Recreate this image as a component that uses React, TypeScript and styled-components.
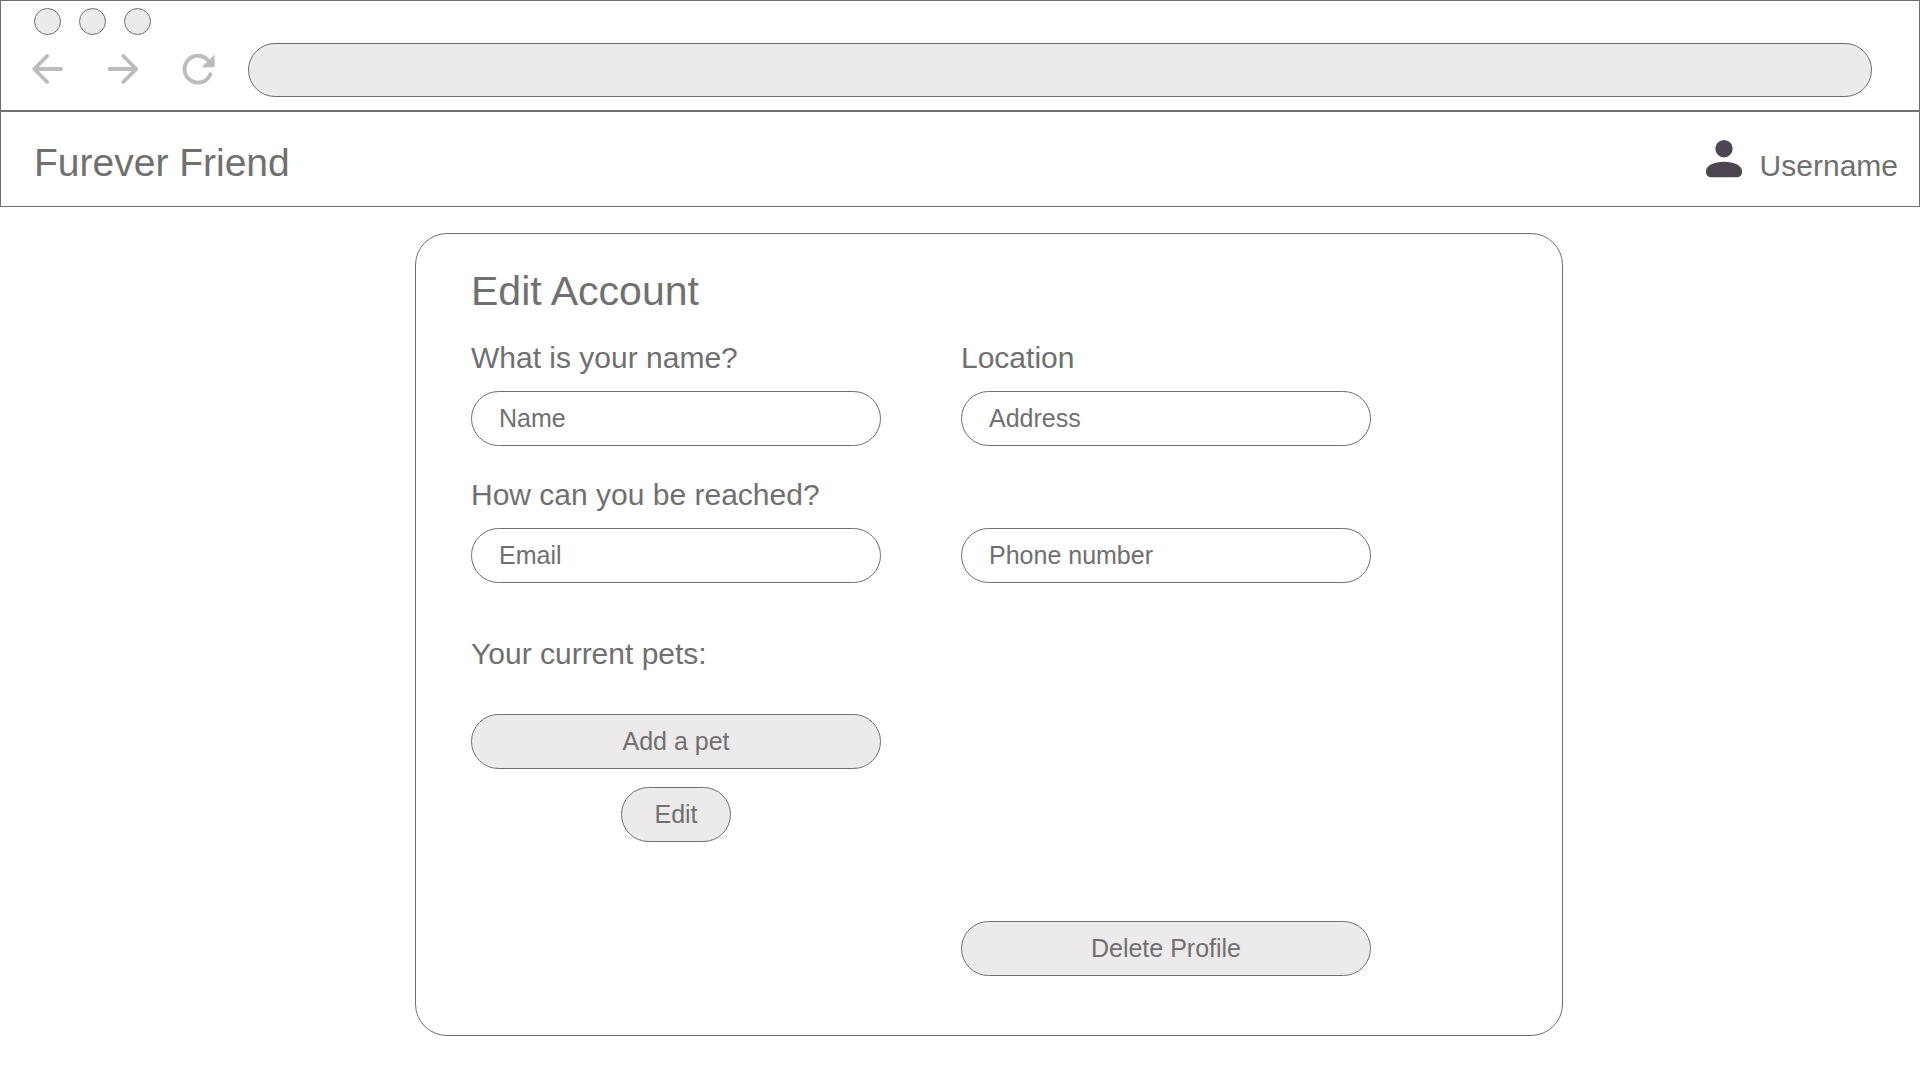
import React, { useId } from "react";
import styled, { createGlobalStyle } from "styled-components";

const ink = "#707070";
const fill = "#eceaeb";

const GlobalStyle = createGlobalStyle`
  *, *::before, *::after { box-sizing: border-box; }
  body {
    margin: 0;
    background: #fff;
    color: ${ink};
    font-family: "Liberation Sans", Arial, Helvetica, sans-serif;
  }
  button, input { font: inherit; color: inherit; }
`;

const BrowserBar = styled.div`
  border: 1px solid ${ink};
  padding: 7px 47px 13px 31px;
`;

const WindowButtons = styled.div`
  display: flex;
  gap: 18px;
  padding-left: 2px;
`;

const WindowButton = styled.button`
  width: 27px;
  height: 27px;
  padding: 0;
  border: 1px solid ${ink};
  border-radius: 50%;
  background: ${fill};
`;

const Toolbar = styled.div`
  display: flex;
  align-items: center;
  padding-top: 8px;
`;

const NavButtons = styled.div`
  display: flex;
  gap: 43px;
  margin-right: 34px;
`;

const NavButton = styled.button`
  display: flex;
  width: 32px;
  height: 32px;
  padding: 0;
  border: 0;
  background: none;
  color: #bbbcbd;

  svg {
    width: 100%;
    height: 100%;
    overflow: visible;
  }
`;

const AddressInput = styled.input`
  flex: 1;
  min-width: 0;
  height: 54px;
  padding: 0 28px;
  border: 1px solid ${ink};
  border-radius: 27px;
  background: ${fill};
  font-size: 25px;
`;

const SiteHeader = styled.header`
  display: flex;
  align-items: baseline;
  justify-content: space-between;
  padding: 27px 21px 20px 33px;
  border: 1px solid ${ink};
`;

const Brand = styled.a`
  color: inherit;
  font-size: 39px;
  line-height: 47px;
  text-decoration: none;
`;

const UserLink = styled.a`
  display: flex;
  align-items: baseline;
  gap: 18px;
  color: inherit;
  font-size: 30px;
  line-height: 35px;
  text-decoration: none;
`;

const PersonIcon = styled.svg`
  width: 36px;
  height: 36px;
  fill: #4d4650;
  overflow: visible;
`;

const Main = styled.main`
  display: grid;
  grid-template-columns: minmax(16px, 415fr) minmax(0, 1148fr) minmax(16px, 357fr);
  padding: 26px 0 44px;
`;

const Card = styled.form`
  grid-column: 2;
  padding: 33px 191px 59px 55px;
  border: 1px solid ${ink};
  border-radius: 32px;
`;

const Title = styled.h1`
  margin: 0 0 25px;
  font-size: 41px;
  font-weight: 400;
  line-height: 48px;
`;

const Columns = styled.div`
  display: grid;
  grid-template-columns: repeat(2, minmax(0, 1fr));
  align-items: end;
  gap: 31px 80px;
`;

const Field = styled.div`
  display: flex;
  flex-direction: column;
  gap: 15px;
`;

const Label = styled.label`
  font-size: 30px;
  line-height: 36px;
`;

const TextInput = styled.input`
  width: 100%;
  height: 55px;
  padding: 0 27px;
  border: 1px solid ${ink};
  border-radius: 28px;
  background: transparent;
  font-size: 25px;

  &::placeholder {
    color: ${ink};
    opacity: 1;
  }
`;

const Pets = styled.section`
  grid-column: 1;
  display: flex;
  flex-direction: column;
  align-items: center;
  gap: 18px;
  padding-top: 22px;
`;

const SectionTitle = styled.h2`
  align-self: stretch;
  margin: 0 0 24px;
  font-size: 30px;
  font-weight: 400;
  line-height: 36px;
`;

const PillButton = styled.button<{ $compact?: boolean }>`
  width: ${(p) => (p.$compact ? "110px" : "100%")};
  height: 55px;
  padding: 0;
  border: 1px solid ${ink};
  border-radius: 28px;
  background: ${fill};
  font-size: 25px;
  cursor: pointer;
`;

const DeleteArea = styled.div`
  grid-column: 2;
  grid-row: 4;
  padding-top: 48px;
`;

type TextFieldProps = { label?: string; placeholder: string; type?: string };

function TextField({ label, placeholder, type = "text" }: TextFieldProps) {
  const id = useId();
  return (
    <Field>
      {label && <Label htmlFor={id}>{label}</Label>}
      <TextInput id={id} type={type} placeholder={placeholder} aria-label={label ? undefined : placeholder} />
    </Field>
  );
}

export default function App() {
  return (
    <>
      <GlobalStyle />
      <BrowserBar>
        <WindowButtons>
          <WindowButton type="button" aria-label="Close" />
          <WindowButton type="button" aria-label="Minimize" />
          <WindowButton type="button" aria-label="Maximize" />
        </WindowButtons>
        <Toolbar>
          <NavButtons>
            <NavButton type="button" aria-label="Back">
              <svg viewBox="0 0 32 32" fill="none" stroke="currentColor" strokeWidth="3.8" strokeLinecap="round" strokeLinejoin="round">
                <path d="M29 15H2.2M15.2 2L2.2 15L15.2 28" />
              </svg>
            </NavButton>
            <NavButton type="button" aria-label="Forward">
              <svg viewBox="0 0 32 32" fill="none" stroke="currentColor" strokeWidth="3.8" strokeLinecap="round" strokeLinejoin="round">
                <path d="M2.5 15H29.3M16.3 2L29.3 15L16.3 28" />
              </svg>
            </NavButton>
            <NavButton type="button" aria-label="Reload">
              <svg viewBox="0 0 32 32">
                <path
                  d="M28.4 20.2A13.4 13.4 0 1 1 25.7 6"
                  fill="none"
                  stroke="currentColor"
                  strokeWidth="3.9"
                  strokeLinecap="round"
                />
                <path d="M32.6 0.5V13.2H19.7Z" fill="currentColor" />
              </svg>
            </NavButton>
          </NavButtons>
          <AddressInput type="text" aria-label="Address bar" />
        </Toolbar>
      </BrowserBar>

      <SiteHeader>
        <Brand href="#">Furever Friend</Brand>
        <UserLink href="#">
          <PersonIcon viewBox="0 0 36 36" aria-hidden="true">
            <circle cx="18" cy="8.7" r="8.7" />
            <path d="M18 21.8C8 21.8 0 25.6 0 31V32.6C0 35.2 2 37.2 4.6 37.2H31.4C34 37.2 36 35.2 36 32.6V31C36 25.6 28 21.8 18 21.8Z" />
          </PersonIcon>
          Username
        </UserLink>
      </SiteHeader>

      <Main>
        <Card>
          <Title>Edit Account</Title>
          <Columns>
            <TextField label="What is your name?" placeholder="Name" />
            <TextField label="Location" placeholder="Address" />
            <TextField label="How can you be reached?" placeholder="Email" type="email" />
            <TextField placeholder="Phone number" type="tel" />
            <Pets>
              <SectionTitle>Your current pets:</SectionTitle>
              <PillButton type="button">Add a pet</PillButton>
              <PillButton type="button" $compact>
                Edit
              </PillButton>
            </Pets>
            <DeleteArea>
              <PillButton type="button">Delete Profile</PillButton>
            </DeleteArea>
          </Columns>
        </Card>
      </Main>
    </>
  );
}
